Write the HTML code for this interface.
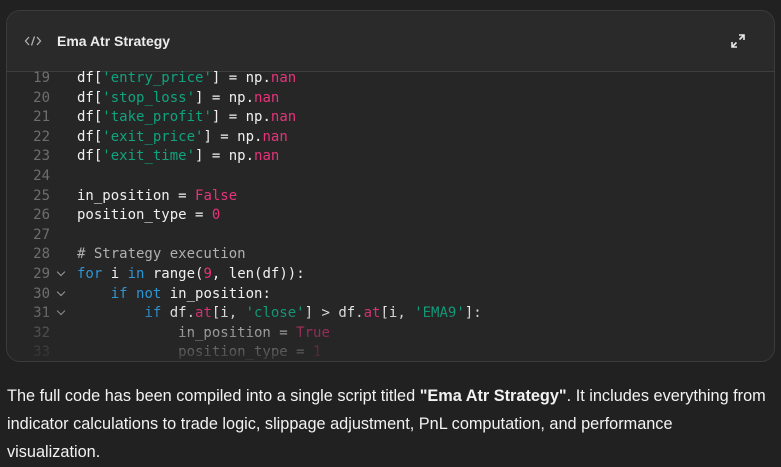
<!DOCTYPE html>
<html><head><style>
body{margin:0;width:781px;height:467px;background:#212121;overflow:hidden;font-family:"Liberation Sans",sans-serif;}
.card{position:absolute;left:6px;top:10px;width:767px;height:350px;border:1px solid #3c3c3c;border-radius:14px;background:#262626;overflow:hidden;}
.hdr{height:60px;background:#2a2a2a;border-bottom:1px solid #3e3e3e;position:relative;}
.hdr .t{position:absolute;left:50px;top:22px;color:#ececec;font-size:14px;font-weight:bold;}
.code{position:absolute;top:58px;left:0;font-family:"DejaVu Sans Mono",monospace;font-size:14px;line-height:19.6px;white-space:pre;color:#f0f0f0;}
.ln{display:inline-block;width:43px;text-align:right;color:#6e6e6e;}
.ch{display:inline-block;width:27px;height:10px;position:relative;}
.ch.v::after{content:"";position:absolute;left:8px;top:1px;width:5px;height:5px;border-right:1.3px solid #9a9a9a;border-bottom:1.3px solid #9a9a9a;transform:rotate(45deg);}
.s{color:#10a37f}.n{color:#e6337a}.k{color:#2e95d3}.c{color:#b0b0b0}
.fade{position:absolute;left:0;right:0;bottom:0;height:55px;background:linear-gradient(rgba(38,38,38,0),rgba(38,38,38,.9));}
p{position:absolute;left:7px;top:382px;margin:0;width:780px;white-space:nowrap;color:#f2f2f2;font-size:16.3px;line-height:28px;}
</style></head><body>
<div class="card">
<div class="hdr">
<svg style="position:absolute;left:17px;top:24px" width="18" height="12" viewBox="0 0 18 12" fill="none" stroke="#b0b0b0" stroke-width="1.3"><path d="M5 2L1.5 6 5 10M13 2l3.5 4L13 10M10.5 1.5l-3 9"/></svg>
<span class="t">Ema Atr Strategy</span>
<svg style="position:absolute;left:723px;top:22px" width="16" height="16" viewBox="0 0 16 16" fill="none" stroke="#e8e8e8" stroke-width="1.6"><path d="M9 2h5v5M14 2L9.5 6.5M7 14H2V9M2 14l4.5-4.5"/></svg></div>
<div class="code"><span class="ln">19</span><span class="ch"></span>df[<span class="s">'entry_price'</span>] = np.<span class="n">nan</span>
<span class="ln">20</span><span class="ch"></span>df[<span class="s">'stop_loss'</span>] = np.<span class="n">nan</span>
<span class="ln">21</span><span class="ch"></span>df[<span class="s">'take_profit'</span>] = np.<span class="n">nan</span>
<span class="ln">22</span><span class="ch"></span>df[<span class="s">'exit_price'</span>] = np.<span class="n">nan</span>
<span class="ln">23</span><span class="ch"></span>df[<span class="s">'exit_time'</span>] = np.<span class="n">nan</span>
<span class="ln">24</span><span class="ch"></span>
<span class="ln">25</span><span class="ch"></span>in_position = <span class="n">False</span>
<span class="ln">26</span><span class="ch"></span>position_type = <span class="n">0</span>
<span class="ln">27</span><span class="ch"></span>
<span class="ln">28</span><span class="ch"></span><span class="c"># Strategy execution</span>
<span class="ln">29</span><span class="ch v"></span><span class="k">for</span> i <span class="k">in</span> range(<span class="n">9</span>, len(df)):
<span class="ln">30</span><span class="ch v"></span>    <span class="k">if</span> <span class="k">not</span> in_position:
<span class="ln">31</span><span class="ch v"></span>        <span class="k">if</span> df.<span class="n">at</span>[i, <span class="s">'close'</span>] &gt; df.<span class="n">at</span>[i, <span class="s">'EMA9'</span>]:
<span class="ln">32</span><span class="ch"></span>            in_position = <span class="n">True</span>
<span class="ln">33</span><span class="ch"></span>            position_type = <span class="n">1</span></div>
<div class="fade"></div>
</div>
<p>The full code has been compiled into a single script titled <b>"Ema Atr Strategy"</b>. It includes everything from<br>indicator calculations to trade logic, slippage adjustment, PnL computation, and performance<br>visualization.</p>
</body></html>
